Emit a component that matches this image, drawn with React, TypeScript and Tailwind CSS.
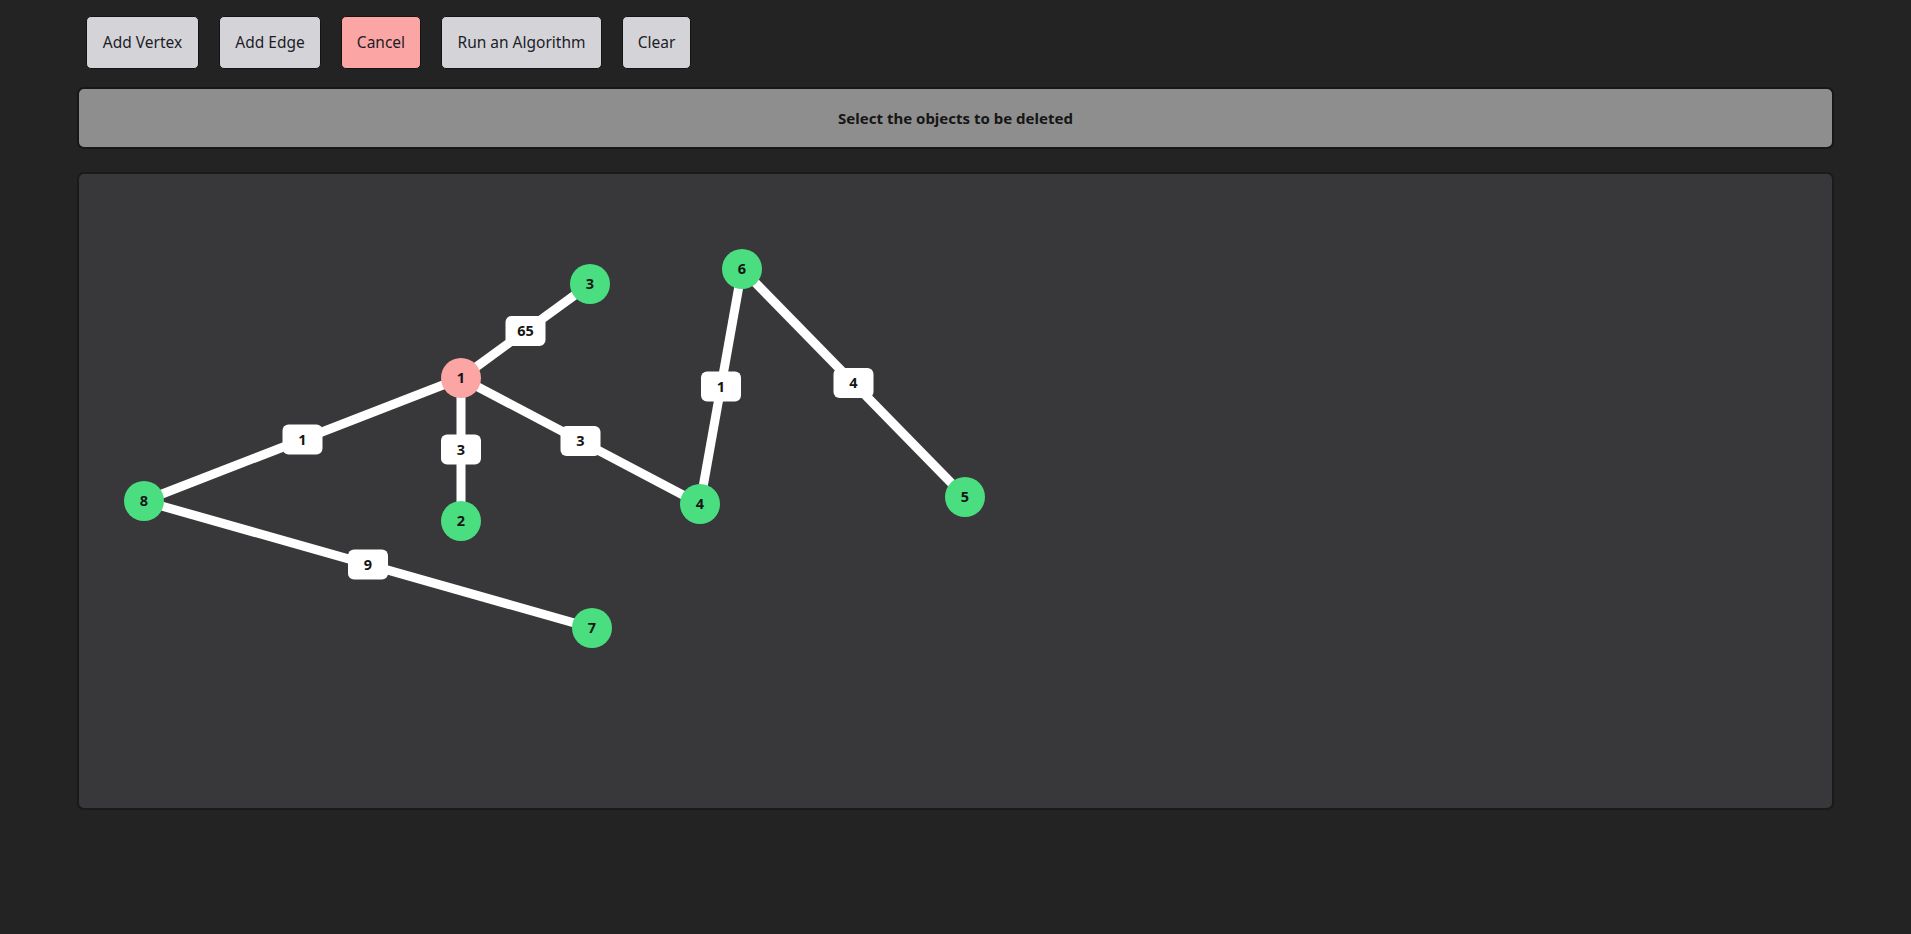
import { useState } from 'react'

type Vertex = { id: string; label: string; x: number; y: number; selected?: boolean }
type Edge = { from: string; to: string; weight: number }

const vertices: Vertex[] = [
  { id: 'a', label: '3', x: 511, y: 110 },
  { id: 'b', label: '6', x: 663, y: 95 },
  { id: 'c', label: '1', x: 382, y: 204, selected: true },
  { id: 'd', label: '8', x: 65, y: 327 },
  { id: 'e', label: '2', x: 382, y: 347 },
  { id: 'f', label: '4', x: 621, y: 330 },
  { id: 'g', label: '5', x: 886, y: 323 },
  { id: 'h', label: '7', x: 513, y: 454 },
]

const edges: Edge[] = [
  { from: 'c', to: 'a', weight: 65 },
  { from: 'c', to: 'd', weight: 1 },
  { from: 'c', to: 'e', weight: 3 },
  { from: 'c', to: 'f', weight: 3 },
  { from: 'b', to: 'f', weight: 1 },
  { from: 'b', to: 'g', weight: 4 },
  { from: 'd', to: 'h', weight: 9 },
]

const buttons = [
  { label: 'Add Vertex', width: 'w-[113px]' },
  { label: 'Add Edge', width: 'w-[102px]' },
  { label: 'Cancel', width: 'w-[80px]', active: true },
  { label: 'Run an Algorithm', width: 'w-[161px]' },
  { label: 'Clear', width: 'w-[69px]' },
]

function GraphCanvas() {
  const byId = Object.fromEntries(vertices.map((v) => [v.id, v]))

  return (
    <svg className="block h-full w-full" style={{ fontFamily: '"Noto Sans", "Open Sans", sans-serif' }}>
      {edges.map((e, i) => {
        const a = byId[e.from]
        const b = byId[e.to]
        return (
          <line
            key={`l${i}`}
            x1={a.x}
            y1={a.y}
            x2={b.x}
            y2={b.y}
            stroke="#ffffff"
            strokeWidth={9}
          />
        )
      })}
      {edges.map((e, i) => {
        const a = byId[e.from]
        const b = byId[e.to]
        const mx = (a.x + b.x) / 2
        const my = (a.y + b.y) / 2
        return (
          <g key={`w${i}`}>
            <rect x={mx - 20} y={my - 15} width={40} height={30} rx={6} fill="#ffffff" />
            <text
              x={mx}
              y={my + 5}
              textAnchor="middle"
              fontSize={14.5}
              fontWeight={700}
              fill="#161616"
            >
              {e.weight}
            </text>
          </g>
        )
      })}
      {vertices.map((v) => (
        <g key={v.id}>
          <circle cx={v.x} cy={v.y} r={20} fill={v.selected ? '#fca5a5' : '#4ade80'} />
          <text
            x={v.x}
            y={v.y + 5}
            textAnchor="middle"
            fontSize={14.5}
            fontWeight={700}
            fill="#161616"
          >
            {v.label}
          </text>
        </g>
      ))}
    </svg>
  )
}

export default function App() {
  const [mode] = useState('delete')

  return (
    <div
      className="min-h-[934px] bg-[#232323] px-[77px] pt-[16px]"
      style={{ fontFamily: '"Noto Sans", "Open Sans", sans-serif' }}
    >
      <div className="flex gap-[20px] pl-[9px]">
        {buttons.map((b) => (
          <button
            key={b.label}
            className={`flex h-[53px] items-center justify-center rounded-[5px] border border-[#141414] text-[15.5px] text-[#1c1c28] ${b.width} ${
              b.active ? 'bg-[#fca5a5]' : 'bg-[#d4d4d8]'
            }`}
          >
            {b.label}
          </button>
        ))}
      </div>

      <div className="mt-[18px] flex h-[62px] items-center justify-center rounded-[7px] border-2 border-[#171717] bg-[#8e8e8e] text-[15px] font-bold text-[#161616]">
        {mode === 'delete' ? 'Select the objects to be deleted' : ''}
      </div>

      <div className="mt-[23px] h-[638px] overflow-hidden rounded-[7px] border-2 border-[#1a1a1a] bg-[#38383a]">
        <GraphCanvas />
      </div>
    </div>
  )
}
